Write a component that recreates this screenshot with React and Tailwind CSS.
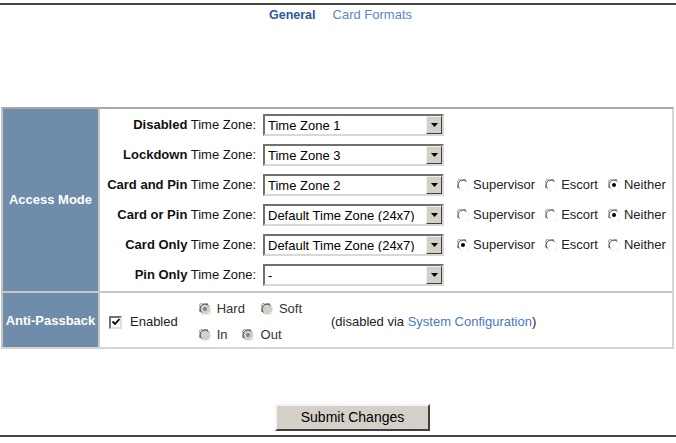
import React from "react";

const font = { fontFamily: '"Liberation Sans", Arial, sans-serif' };

function Radio({ checked, disabled }) {
  return (
    <svg width="12" height="12" viewBox="0 0 12 12" className="shrink-0">
      <circle cx="6" cy="6" r="5.5" fill={disabled ? "#d4d0c8" : "#fff"} />
      <path d="M1.2 9 A5.5 5.5 0 0 1 9 1.2" stroke="#808080" strokeWidth="1" fill="none" />
      <path d="M2.5 9.5 A4.5 4.5 0 0 1 9.5 2.5" stroke="#404040" strokeWidth="1" fill="none" />
      <path d="M10.8 3 A5.5 5.5 0 0 1 3 10.8" stroke="#e8e8e8" strokeWidth="1" fill="none" />
      {checked && <circle cx="6" cy="6" r="2" fill={disabled ? "#808080" : "#000"} />}
    </svg>
  );
}

function Select({ value }) {
  return (
    <div className="w-[181px] h-[22px] border-2 border-t-[#707070] border-l-[#707070] border-b-[#d8d8d8] border-r-[#d8d8d8] bg-white flex items-center">
      <span className="flex-1 pl-[3px] text-[13px] text-black leading-none whitespace-nowrap overflow-hidden">{value}</span>
      <div className="w-[16px] h-[18px] bg-[#d4d0c8] border border-t-[#f0f0f0] border-l-[#f0f0f0] border-b-[#404040] border-r-[#404040] flex items-center justify-center">
        <svg width="7" height="4" viewBox="0 0 7 4"><path d="M0 0H7L3.5 4Z" fill="#000" /></svg>
      </div>
    </div>
  );
}

function RadioGroup({ sel }) {
  const opts = ["Supervisor", "Escort", "Neither"];
  return (
    <div className="flex items-center ml-[13px] text-[13px]">
      {opts.map((o, i) => (
        <div key={o} className={"flex items-center gap-[4px] " + (i > 0 ? "ml-[10px]" : "")}>
          <Radio checked={sel === i} />
          <span className="text-[#222]">{o}</span>
        </div>
      ))}
    </div>
  );
}

const rows = [
  { b: "Disabled", v: "Time Zone 1", r: null },
  { b: "Lockdown", v: "Time Zone 3", r: null },
  { b: "Card and Pin", v: "Time Zone 2", r: 2 },
  { b: "Card or Pin", v: "Default Time Zone (24x7)", r: 2 },
  { b: "Card Only", v: "Default Time Zone (24x7)", r: 0 },
  { b: "Pin Only", v: "-", r: null },
];

export default function App() {
  return (
    <div style={font} className="w-[676px] h-[443px] bg-white relative overflow-hidden text-black">
      <div className="pt-[3px]">
        <div className="h-[2px] bg-[#454545]" />
      </div>
      <div className="flex justify-center gap-[17px] mt-[2px] pl-[5px] text-[13px] leading-[16px]">
        <span className="font-bold text-[#2b5a9c] text-[12.5px]">General</span>
        <span className="text-[#5b85c6]">Card Formats</span>
      </div>
      <div className="mt-[84px] ml-[1px] w-[673px] border-2 border-t-[#a8a8a8] border-l-[#c4c4c4] border-r-[#d4d4d4] border-b-[#d4d4d4] flex flex-col">
        <div className="flex border-b-2 border-[#c8c8c8]">
          <div className="w-[97px] bg-[#6f8cab] flex items-center justify-center text-white font-bold text-[13px] border-r-2 border-[#c8c8c8]">
            Access Mode
          </div>
          <div className="flex-1 flex flex-col pt-[1px] pb-[1px]">
            {rows.map((r) => (
              <div key={r.b} className="h-[30px] flex items-center">
                <div className="w-[158px] text-right text-[13px] whitespace-nowrap text-[#111] pr-[2px]">
                  <span className="font-bold">{r.b}</span> Time Zone:
                </div>
                <div className="ml-[5px]">
                  <Select value={r.v} />
                </div>
                {r.r !== null && <RadioGroup sel={r.r} />}
              </div>
            ))}
          </div>
        </div>
        <div className="flex h-[54px]">
          <div className="w-[97px] bg-[#6f8cab] flex items-center justify-center pt-[2px] text-white font-bold text-[13px] border-r-2 border-[#c8c8c8]">
            Anti-Passback
          </div>
          <div className="flex-1 flex items-center pt-[4px] text-[13px] text-[#222]">
            <div className="ml-[9px] w-[13px] h-[13px] bg-white border-2 border-t-[#707070] border-l-[#707070] border-b-[#e0e0e0] border-r-[#e0e0e0] flex items-center justify-center">
              <svg width="8" height="8" viewBox="0 0 8 8"><path d="M0.5 3.5 L3 6 L7.5 1" stroke="#000" strokeWidth="1.8" fill="none" /></svg>
            </div>
            <span className="ml-[8px]">Enabled</span>
            <div className="ml-[21px] flex flex-col gap-[7px]">
              <div className="flex items-center h-[19px]">
                <Radio checked disabled />
                <span className="ml-[6px] text-[#333]">Hard</span>
                <span className="ml-[16px]"><Radio disabled /></span>
                <span className="ml-[6px] text-[#333]">Soft</span>
              </div>
              <div className="flex items-center h-[19px]">
                <Radio disabled />
                <span className="ml-[6px] text-[#333]">In</span>
                <span className="ml-[14px]"><Radio checked disabled /></span>
                <span className="ml-[7px] text-[#333]">Out</span>
              </div>
            </div>
            <span className="ml-[29px]">
              (disabled via <span className="text-[#4a78c4]">System Configuration</span>)
            </span>
          </div>
        </div>
      </div>
      <div className="flex justify-center mt-[55px] pl-[29px]">
        <div className="w-[155px] h-[27px] bg-[#d4d0c8] border-2 border-t-[#f4f4f4] border-l-[#f4f4f4] border-b-[#404040] border-r-[#404040] flex items-center justify-center text-[14px] text-black">
          Submit Changes
        </div>
      </div>
      <div className="mt-[4px] h-[2px] bg-[#454545]" />
    </div>
  );
}
